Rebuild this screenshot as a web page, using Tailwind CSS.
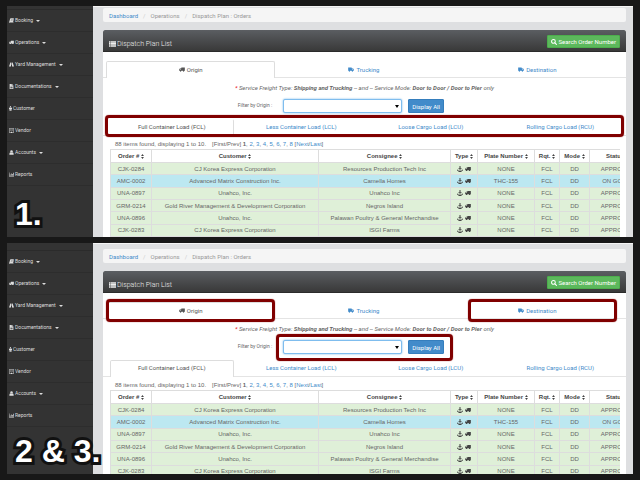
<!DOCTYPE html>
<html lang="en">
<head>
<meta charset="utf-8">
<title>Dispatch Plan : Orders</title>
<script src="https://cdn.jsdelivr.net/npm/@tailwindcss/browser@4"></script>
</head>
<body class="bg-[#181818] font-['Roboto','Liberation_Sans',sans-serif]">
<svg class="hidden" aria-hidden="true">
  <symbol id="truck" viewBox="0 0 18 14"><path d="M7 1h10.500v9.500H16a2.200 2.200 0 0 1-4.400 0H7a2.200 2.200 0 0 1-4.400 0H.5V6.300L3.300 3.300H7zM2 6.800h3.600V4.600H3.900z" fill-rule="evenodd"/><circle cx="4.800" cy="11" r="1.700"/><circle cx="13.800" cy="11" r="1.700"/></symbol>
  <symbol id="anchor" viewBox="0 0 16 16"><path d="M8 0a2.300 2.300 0 0 1 1.100 4.300V6H12v2H9.100v5.500c1.700-.2 2.900-1 3.500-1.800L11.500 10.500 15.500 9.500v4l-1.300-1c-1.300 2-3.600 3.300-6.200 3.300S3.100 14.500 1.800 12.500l-1.300 1v-4l4 1-1.100 1.200c.6.800 1.800 1.600 3.500 1.800V8H4V6h2.900V4.300A2.300 2.300 0 0 1 8 0zm0 1.500a.8.800 0 1 0 0 1.600.8.800 0 0 0 0-1.600z" fill-rule="evenodd"/></symbol>
  <symbol id="sort" viewBox="0 0 8 14"><path d="M4 0l4 5.500H0zM4 14L0 8.500h8z"/></symbol>
  <symbol id="list" viewBox="0 0 18 14"><path d="M0 0h4v3H0zM5 0h13v3H5zM0 3.700h4v3H0zM5 3.700h13v3H5zM0 7.400h4v3H0zM5 7.400h13v3H5zM0 11h4v3H0zM5 11h13v3H5z"/></symbol>
  <symbol id="search" viewBox="0 0 16 16"><circle cx="6.500" cy="6.500" r="5" fill="none" stroke="currentColor" stroke-width="2.800"/><path d="M10.300 10.300l4.200 4.200" stroke="currentColor" stroke-width="3" stroke-linecap="round"/></symbol>
  <symbol id="book" viewBox="0 0 16 16"><path d="M5 1h10.500L12.500 13H2.500q-.8.800 0 1.400h10.800L16 4v2l-2.500 10H2Q0 15 .5 12.500L3.500 3Q4 1 5 1zM6.500 4l-.3 1h6l.3-1zM5.700 6.800l-.3 1h6l.3-1z" fill-rule="evenodd"/></symbol>
  <symbol id="road" viewBox="0 0 18 16"><path d="M5 1h3l-.2 3h2.400L10 1h3l5 14h-7l-.3-5H7.300L7 15H0zM7.700 5.500l-.2 3h3l-.2-3z" fill-rule="evenodd"/></symbol>
  <symbol id="file" viewBox="0 0 14 16"><path d="M1 0h7v5h5v11H1zM9 0l4 4H9zM3.500 7v1.200h7V7zm0 2.600v1.200h7V9.600zm0 2.600v1.200h7v-1.200z" fill-rule="evenodd"/></symbol>
  <symbol id="male" viewBox="0 0 10 16"><circle cx="5" cy="2" r="2"/><path d="M2 4.500h6l2 1.500v4.500H8V16H5.500v-5h-1v5H2v-5.500H0V6z"/></symbol>
  <symbol id="building" viewBox="0 0 14 16"><path d="M0 0h14v16H0zM1.500 1.500v13H5V12h4v2.500h3.500v-13zM4 3.500h2v2H4zm4 0h2v2H8zM4 7.500h2v2H4zm4 0h2v2H8z" fill-rule="evenodd"/></symbol>
  <symbol id="user" viewBox="0 0 14 16"><circle cx="7" cy="4.500" r="4"/><path d="M3 7.500q4 3.500 8 0Q14 9 14 15H0Q0 9 3 7.500z"/></symbol>
  <symbol id="chart" viewBox="0 0 18 16"><path d="M0 1h1.500v12.500H18V15H0zM3 8h2.500v4.500H3zM7 4h2.500v8.500H7zM11 6h2.500v6.500H11zM14.500 2H17v10.500h-2.500z"/></symbol>
</svg>

<main id="steps" class="grid h-screen grid-rows-2 gap-[6px] px-[7px] py-[6px]"></main>

<script>
const icon = (name, cls) => `<svg class="inline-block shrink-0 fill-current ${cls}" aria-hidden="true"><use href="#${name}"/></svg>`;
const menu = [['book','Booking',1],['truck','Operations',1],['road','Yard Management',1],['file','Documentations',1],['male','Customer',0],['building','Vendor',0],['user','Accounts',1],['chart','Reports',0]];
const orders = [
  ['CJK-0284','CJ Korea Express Corporation','Resources Production Tech Inc','NONE','APPROVED'],
  ['AMC-0002','Advanced Matrix Construction Inc.','Camella Homes','THC-155','ON GOING'],
  ['UNA-0897','Unahco, Inc.','Unahco Inc','NONE','APPROVED'],
  ['GRM-0214','Gold River Management &amp; Development Corporation','Negros Island','NONE','APPROVED'],
  ['UNA-0896','Unahco, Inc.','Palawan Poultry &amp; General Merchandise','NONE','APPROVED'],
  ['CJK-0283','CJ Korea Express Corporation','ISGI Farms','NONE','APPROVED']];
const columns = [['Order #','w-[41px]'],['Customer',''],['Consignee','w-[132px]'],['Type','w-[27px]'],['Plate Number','w-[57px]'],['Rqt.','w-[25px]'],['Mode','w-[30px]'],['Status','w-[56px]']];
const mark = pos => `<span class="pointer-events-none absolute z-10 rounded-[4px] border-3 border-[#800000] shadow-[0_0_1px_#800000] ${pos}"></span>`;
const td = 'border border-[#dddddd] p-0 text-center';

function panel(n, label, top) {
  const first = n === 1;
  return `<section class="relative flex min-h-0 overflow-hidden bg-[#dedfe1]">
  <nav class="w-[86px] shrink-0 bg-[#333333] ${top ? 'pt-[7px]' : 'pt-[3px]'}">
    <ul class="border-t border-[#2b2b2b] text-[5px] text-[#dddddd]">
      ${menu.map(([i, t, c]) => `<li class="h-[22px] border-b border-[#2d2d2d]"><a href="#" class="flex h-full items-center gap-[1px] pl-[2px]">${icon(i, i === 'male' ? 'h-[5px] w-[3px]' : 'h-[5px] w-[5px]')}<span>${t}</span>${c ? '<span class="ml-[2px] border-x-2 border-t-2 border-x-transparent border-t-[#dddddd]"></span>' : ''}</a></li>`).join('')}
    </ul>
  </nav>
  <div class="min-w-0 flex-1 border-t border-[#f4f4f4] pr-[7px] pl-[10px] text-[6px] text-[#666666] ${top ? 'pt-[5px]' : 'pt-[1px]'}">
    <nav class="flex h-[14px] items-center gap-[5px] rounded-[2px] bg-[#f5f5f5] pl-[6px] text-[#999999]" aria-label="Breadcrumb">
      <a href="#" class="text-[#428bca]">Dashboard</a><span class="text-[#cccccc]">/</span><span>Operations</span><span class="text-[#cccccc]">/</span><span>Dispatch Plan : Orders</span>
    </nav>
    <div class="mt-[8px] bg-white">
      <header class="flex h-[22px] items-center justify-between rounded-t-[2px] border-b border-[#2b2b2b] bg-linear-to-b from-[#5b5e62] to-[#393939] px-[6px] pt-[2px]">
        <h2 class="flex items-center gap-[1px] pt-[4px] text-[7px] leading-[8px] font-light text-[#eeeeee]">${icon('list', 'h-[6px] w-[7px]')}Dispatch Plan List</h2>
        <button type="button" class="flex h-[13px] items-center gap-[1px] rounded-[1px] border border-[#4cae4c] bg-[#5cb85c] px-[3px] text-white">${icon('search', 'h-[6px] w-[6px]')}Search Order Number</button>
      </header>
      <div class="mt-[9px] grid h-[17px] grid-cols-3 gap-[4px] border-b border-[#e4e4e4] pr-[4px] pl-[3px] text-[#428bca]">
        <a href="#" class="relative -mb-px flex items-center justify-center gap-[2px] rounded-t-[2px] border border-b-0 border-[#dddddd] bg-white pb-[2px] text-[#555555]">${icon('truck', 'h-[5px] w-[6px]')}Origin${first ? '' : mark('-top-[4px] -bottom-[3px] -inset-x-px')}</a>
        <a href="#" class="flex items-center justify-center gap-[2px]">${icon('truck', 'h-[5px] w-[6px] -scale-x-100')}Trucking</a>
        <a href="#" class="relative flex items-center justify-center gap-[2px]">${icon('truck', 'h-[5px] w-[6px] -scale-x-100')}Destination${first ? '' : mark('-top-[3px] -bottom-[4px] left-[15px] right-[5px]')}</a>
      </div>
      <p class="mt-[5px] text-center leading-[10px] italic"><span class="text-red-600">*</span> Service Freight Type: <b>Shipping and Trucking</b> -- and -- Service Mode: <b>Door to Door / Door to Pier</b> only</p>
      <form class="mt-[6px] flex items-center justify-center gap-[11px] pr-[47px]">
        <label for="origin${n}" class="text-[5px]">Filter by Origin :</label>
        <div class="relative flex h-[14px] gap-[6px]">
          <div class="relative">
            <select id="origin${n}" class="block h-full w-[119px] appearance-none rounded-[2px] border border-[#7fbdee] bg-white shadow-[0_0_2px_#66afe9]"><option></option></select>
            <span class="pointer-events-none absolute top-[6px] right-[3px] border-x-2 border-t-3 border-x-transparent border-t-black"></span>
          </div>
          <button type="button" class="w-[36px] rounded-[1px] border border-[#357ebd] bg-[#428bca] text-white">Display All</button>
          ${first ? '' : mark('-top-[6px] -bottom-[7px] -left-[7px] -right-[9px]')}
        </div>
      </form>
      <div class="relative mt-[6px] grid h-[17px] grid-cols-4 gap-[6px] border-b border-[#e4e4e4] pr-[4px] pl-[7px] text-[#428bca]">
        <a href="#" class="-mb-px flex items-center justify-center rounded-t-[2px] border border-b-0 bg-white pb-[3px] text-[#555555] ${first ? 'border-t-transparent border-r-[#dddddd] border-l-transparent' : 'border-[#dddddd]'}">Full Container Load (FCL)</a>
        <a href="#" class="flex items-center justify-center pb-[2px]">Less Container Load (LCL)</a>
        <a href="#" class="flex items-center justify-center pb-[2px]">Loose Cargo Load (LCU)</a>
        <a href="#" class="flex items-center justify-center pb-[2px]">Rolling Cargo Load (RCU)</a>
        ${first ? mark('-top-[4px] -bottom-[2px] inset-x-[2px]') : ''}
      </div>
      <div class="overflow-hidden pt-[4px] pr-[6px] pl-[7px] font-['Liberation_Sans',sans-serif]">
        <div class="flex gap-[6px] pl-[5px] leading-[9px]"><span>88 items found, displaying 1 to 10.</span><span>[First/Prev] <b>1</b>${[2,3,4,5,6,7,8].map(p => `, <a href="#" class="text-[#428bca]">${p}</a>`).join('')} [<a href="#" class="text-[#428bca]">Next</a>/<a href="#" class="text-[#428bca]">Last</a>]</span></div>
        <div class="overflow-hidden">
        <table class="h-[88px] w-[calc(100%+26px)] table-fixed border-collapse leading-[10px]">
          <thead><tr class="h-[13px]">${columns.map(([c, w]) => `<th class="${td} ${w} font-bold whitespace-nowrap text-[#444444]">${c} ${icon('sort', 'h-[5px] w-[3px]')}</th>`).join('')}</tr></thead>
          <tbody>${orders.map((o, i) => `<tr class="${i === 1 ? 'bg-[#bce8f1]' : 'bg-[#dff0d8]'}">${[o[0], o[1], o[2], `<span class="flex justify-center gap-[2px] text-[#444444]">${icon('anchor', 'h-[6px] w-[6px]')}${icon('truck', 'h-[6px] w-[6px]')}</span>`, o[3], 'FCL', 'DD', o[4]].map(v => `<td class="${td}">${v}</td>`).join('')}</tr>`).join('')}</tbody>
        </table>
        </div>
      </div>
    </div>
  </div>
  <strong class="absolute bottom-[7px] left-[8px] z-20 font-['Liberation_Sans',sans-serif] text-[32px] leading-[32px] font-bold whitespace-pre text-white [-webkit-text-stroke:6px_#111111] [paint-order:stroke_fill]">${label}</strong>
</section>`;
}
document.getElementById('steps').innerHTML = panel(1, '1.', false) + panel(2, '2 &amp; 3.', true);
</script>
</body>
</html>
